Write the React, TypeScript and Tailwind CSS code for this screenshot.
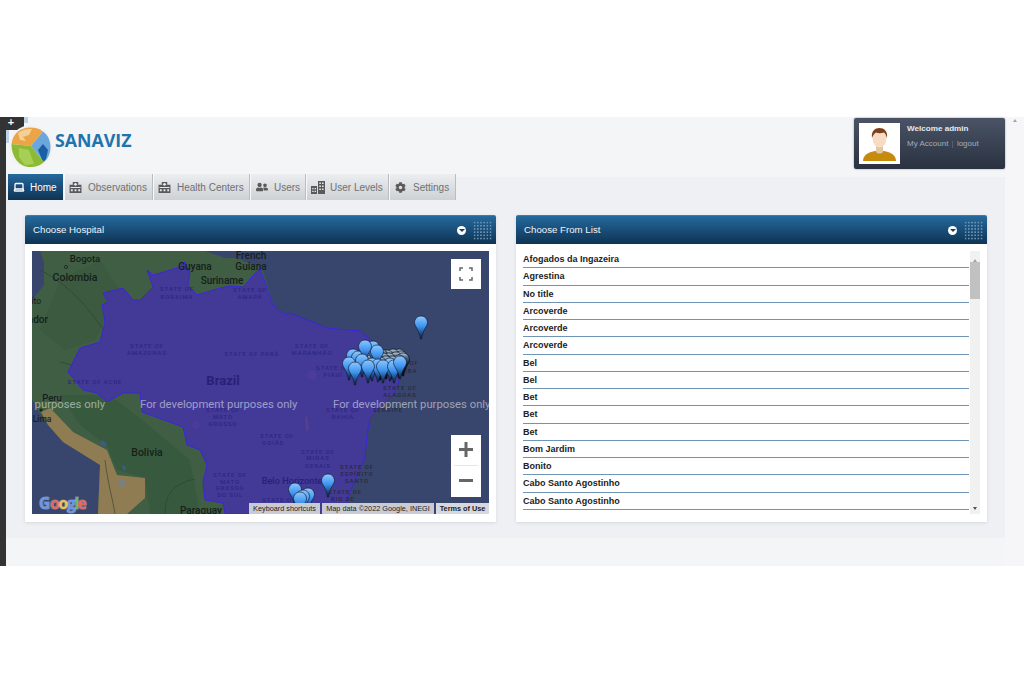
import { Laptop } from "lucide-react";
import { FaCog, FaUserFriends } from "react-icons/fa";

const places = [
  "Afogados da Ingazeira",
  "Agrestina",
  "No title",
  "Arcoverde",
  "Arcoverde",
  "Arcoverde",
  "Bel",
  "Bel",
  "Bet",
  "Bet",
  "Bet",
  "Bom Jardim",
  "Bonito",
  "Cabo Santo Agostinho",
  "Cabo Santo Agostinho",
];

// top-centre of each marker, back to front
const backPins = [
  [399, 349], [393, 349], [387, 350], [381, 349], [375, 351], [370, 353],
  [401, 351], [396, 352], [389, 353], [383, 353], [377, 354], [371, 355],
  [403, 353], [399, 355], [392, 356], [386, 356], [380, 357],
];
const frontPins = [
  [373, 341], [377, 345], [353, 349], [358, 351], [365, 340], [362, 354], [349, 357],
  [372, 358], [378, 359], [390, 358], [355, 362], [368, 360], [383, 360], [394, 360], [400, 356],
  [421, 316], [295, 483], [308, 488], [303, 490], [300, 492], [328, 474],
];

const stateLabels: [string, number, number][] = [
  ["STATE OF", 147, 348], ["AMAZONAS", 147, 355],
  ["STATE OF", 177, 291], ["RORAIMA", 177, 299],
  ["STATE OF", 250, 292], ["AMAPÁ", 250, 299],
  ["STATE OF PARÁ", 252, 356], ["STATE OF ACRE", 95, 384],
  ["STATE OF", 312, 348], ["MARANHÃO", 312, 355],
  ["STATE OF", 333, 370], ["PIAUÍ", 333, 377],
  ["STATE OF", 223, 412], ["MATO", 223, 419], ["GROSSO", 223, 426],
  ["STATE OF", 230, 477], ["MATO", 230, 484], ["GROSSO", 230, 490], ["DO SUL", 230, 497],
  ["STATE OF", 277, 438], ["GOIÁS", 273, 445],
  ["STATE OF", 318, 454], ["MINAS", 318, 460], ["GERAIS", 318, 468],
  ["STATE OF", 343, 412], ["BAHIA", 343, 419],
  ["STATE O", 277, 502],
];

const darkStateLabels: [string, number, number][] = [
  ["STATE OF", 357, 469], ["ESPÍRITO", 357, 476], ["SANTO", 357, 483],
  ["STATE OF", 345, 494], ["RIO DE", 343, 501],
  ["STATE OF", 400, 390], ["ALAGOAS", 400, 397],
  ["OF", 414, 365], ["PARAÍBA", 402, 373], ["SERGIPE", 388, 412],
];

const mapLabels: [string, number, number, number][] = [
  ["Bogota", 85, 262, 9.5],
  ["Colombia", 75, 281, 10.5],
  ["Guyana", 195, 270, 10],
  ["Suriname", 222, 284, 10],
  ["French", 251, 259, 10],
  ["Guiana", 251, 270, 10],
  ["Peru", 52, 401, 9.5],
  ["Lima", 42, 422, 8.5],
  ["Bolivia", 147, 456, 10.5],
  ["Paraguay", 201, 514, 10],
];

function Pin({ x, y, dark }: { x: number; y: number; dark?: boolean }) {
  return (
    <g transform={`translate(${x - 6.5} ${y})`}>
      <path
        d="M6.5 0C10.1 0 13 2.9 13 6.5 13 10.5 8 14 7.1 23H5.9C5 14 0 10.5 0 6.5 0 2.9 2.9 0 6.5 0Z"
        fill={dark ? "url(#pinDark)" : "url(#pinBlue)"}
        stroke={dark ? "#05070d" : "#141d33"}
        strokeWidth="0.7"
      />
    </g>
  );
}

function MapDrawing() {
  const brazil =
    "147,270 153,275 177,268 185,262 190,273 188,285 197,295 220,288 230,286 243,287 260,268 267,288 273,305 285,315 290,313 320,325 327,328 360,331 373,342 403,362 403,372 393,395 370,418 367,435 365,458 350,492 347,502 337,514 225,514 223,503 205,500 203,482 207,465 200,450 187,445 183,427 142,412 140,393 123,393 107,402 97,393 83,390 68,372 80,348 100,342 105,322 102,305 108,302 103,293 123,288 133,300 140,300 153,287";
  return (
    <svg viewBox="32 251 457 263" className="block w-full h-full" style={{ fontFamily: "Roboto, sans-serif" }}>
      <defs>
        <linearGradient id="pinBlue" x1="0" y1="0" x2="0" y2="1">
          <stop offset="0" stopColor="#8cc8ff" />
          <stop offset="0.45" stopColor="#3f94ee" />
          <stop offset="0.75" stopColor="#1c4f8c" />
          <stop offset="1" stopColor="#0d1a30" />
        </linearGradient>
        <linearGradient id="pinDark" x1="0" y1="0" x2="0" y2="1">
          <stop offset="0" stopColor="#c3d3e2" />
          <stop offset="0.18" stopColor="#4f6d8e" />
          <stop offset="0.5" stopColor="#10192a" />
          <stop offset="1" stopColor="#05070d" />
        </linearGradient>
      </defs>

      <rect x="32" y="251" width="457" height="263" fill="#38466d" />
      <polygon
        points="40,251 205,251 225,258 236,258 262,268 275,310 403,362 360,400 320,514 98,514 100,465 63,442 48,425 38,410 32,400 32,300 44,285 44,262"
        fill="#3f5e43"
      />
      <polygon points="60,395 110,395 142,420 190,460 200,514 150,514 145,478 117,470 107,446 80,425" fill="#375a3e" />
      <polygon points="50,408 57,415 73,432 107,450 117,475 145,478 145,498 127,514 98,514 100,465 63,442 48,425 41,412" fill="#8f7c52" />
      <polygon points="60,280 100,260 120,290 95,340 65,350 40,330" fill="#3b5a40" />
      <path d="M102 440l5 4-2 3-5-4z" fill="#3d5a8c" />
      <path d="M123 465l3 2-1 4-3-3z" fill="#3d5a8c" />
      <circle cx="122" cy="483" r="4" fill="#7d7f7a" />
      <path d="M40 270c30 15 50 40 65 62M60 362c25 5 30 15 40 20M105 460c3 25 8 40 10 54M165 514c0-20 8-30 30-35" fill="none" stroke="#2c3f2d" strokeWidth="0.6" />

      <polygon points={brazil} fill="#423a96" stroke="#3a22e6" strokeWidth="0.9" strokeLinejoin="round" />
      <circle cx="312" cy="375" r="5" fill="#4a3c98" />
      <path d="M307 415l2 14-3 3-1-14z" fill="#55408f" />
      <circle cx="196" cy="425" r="4" fill="#4a3c98" />

      <g fill="#2f2585" fontSize="6" fontWeight="500" textAnchor="middle" letterSpacing="0.9">
        {stateLabels.map(([t, x, y], i) => (
          <text key={i} x={x} y={y}>{t}</text>
        ))}
      </g>
      <g fill="#2c2838" fontSize="6" fontWeight="500" textAnchor="middle" letterSpacing="0.9">
        {darkStateLabels.map(([t, x, y], i) => (
          <text key={i} x={x} y={y}>{t}</text>
        ))}
      </g>
      <text x="223" y="385" fontSize="13" fontWeight="700" fill="#2a1f78" textAnchor="middle">Brazil</text>
      <text x="292" y="484" fontSize="9.2" fontWeight="500" fill="#2a1f78" textAnchor="middle">Belo Horizonte</text>

      <g fill="#16201a" fontWeight="500" textAnchor="middle">
        {mapLabels.map(([t, x, y, s]) => (
          <text key={t} x={x} y={y} fontSize={s}>{t}</text>
        ))}
      </g>
      <text x="41" y="304" fontSize="8.5" fill="#16201a" textAnchor="end">Quito</text>
      <text x="48" y="323" fontSize="10" fontWeight="500" fill="#16201a" textAnchor="end">Ecuador</text>
      <circle cx="66" cy="267" r="1.6" fill="none" stroke="#1b241c" strokeWidth="0.8" />
      <circle cx="41" cy="410" r="1.5" fill="#1b241c" />

      <g fill="#ffffff" fillOpacity="0.5" fontSize="11.3">
        <text x="105" y="408" textAnchor="end">purposes only</text>
        <text x="140" y="408">For development purposes only</text>
        <text x="333" y="408">For development purposes only</text>
      </g>

      <g fontSize="15.5" fontWeight="700" stroke="#ffffff" strokeOpacity="0.35" strokeWidth="1.2" paintOrder="stroke" style={{ fontFamily: '"Open Sans", sans-serif' }}>
        <text x="39" y="509" fill="#6b97e8">G</text>
        <text x="50" y="509" fill="#e8675c">o</text>
        <text x="58.5" y="509" fill="#eec24a">o</text>
        <text x="67" y="509" fill="#6b97e8">g</text>
        <text x="74.5" y="509" fill="#6cb46c">l</text>
        <text x="77.5" y="509" fill="#e8675c">e</text>
      </g>

      {backPins.map(([x, y], i) => (
        <Pin key={i} x={x} y={y} dark />
      ))}
      {frontPins.map(([x, y], i) => (
        <Pin key={i} x={x} y={y} />
      ))}
    </svg>
  );
}

function HospitalIcon() {
  return (
    <svg viewBox="0 0 14 12" className="w-[13px] h-[11px]" fill="#5a5a5a">
      <path d="M4 0h6v3h3.5v9H.5V3H4z" />
      <path d="M6.2 1h1.6v1h1v1.2h-1v1H6.2v-1h-1V2h1z" fill="#e5e7e9" />
      <path d="M1.5 5.5h11v1h-11zM2 8h2v2H2zM6 8h2v2H6zM10 8h2v2h-2z" fill="#e5e7e9" />
    </svg>
  );
}

function LevelsIcon() {
  return (
    <svg viewBox="0 0 14 13" className="w-[14px] h-[13px]" fill="#5a5a5a">
      <path d="M7 0h7v13H7zM0 5h6v8H0z" />
      <path d="M8.3 1.5h1.6v1.4H8.3zM11 1.5h1.6v1.4H11zM8.3 4.5h1.6v1.4H8.3zM11 4.5h1.6v1.4H11zM8.3 7.5h1.6v1.4H8.3zM11 7.5h1.6v1.4H11zM1.2 7h1.4v1.3H1.2zM3.6 7h1.4v1.3H3.6zM1.2 9.8h1.4v1.3H1.2zM3.6 9.8h1.4v1.3H3.6z" fill="#e5e7e9" />
    </svg>
  );
}

function Logo() {
  return (
    <svg viewBox="0 0 44 44" className="w-[44px] h-[46px]">
      <circle cx="22" cy="22" r="22" fill="#f2f2f2" />
      <path d="M22 21 2.500 19C3.500 9 11 2.500 21 2.500c6 0 10 1.500 13 4z" fill="#eda447" />
      <path d="M9 8c4-3 9-4.500 14-4l-3 6-6 2 3 4-6-1z" fill="#f3d095" />
      <path d="M22 21 34 6.500C39 10 41.500 16 41.500 22c0 6-2.500 12-6.500 15z" fill="#6ba6dc" />
      <path d="M29 25l5-6 5 6-2 9-3 3z" fill="#1a5ea6" />
      <path d="M22 21 35 37c-3 3-8 5-14 5C10 42 2.500 32 2.500 19z" fill="#8cba34" />
      <path d="M10 23l10 2 5 14-9 1-6-8z" fill="#a7cf55" />
    </svg>
  );
}

function Avatar() {
  return (
    <svg viewBox="0 0 41 41" className="w-[41px] h-[41px] block bg-white">
      <path d="M4 38c0-7 7-9 12-10h9c5 1 12 3 12 10z" fill="#c68b0c" />
      <path d="M17 22h7v7c-1.500 2-5.500 2-7 0z" fill="#e2c6a6" />
      <ellipse cx="20.500" cy="15" rx="7" ry="9.500" fill="#f6dcc0" />
      <path d="M13 15c-1-7 3-10 7.500-10S29 8 28 15c-1-3-2-5-3-5.500-3 1-6 1-8 0-2 1-3 3-4 5.500z" fill="#7d3f1f" />
    </svg>
  );
}

function PanelHeader({ title }: { title: string }) {
  return (
    <div className="h-[29px] flex items-center justify-between pl-2 pr-[4px] rounded-t-[2px] bg-gradient-to-b from-[#26699e] to-[#0e3454] border-t border-[#3a7cb0]">
      <span className="text-[9.7px] text-[#f1f4f7]">{title}</span>
      <div className="flex items-center gap-[7px]">
        <span className="w-[9px] h-[9px] rounded-full bg-white flex items-center justify-center">
          <span className="mt-[1px] border-x-[3px] border-x-transparent border-t-[3px] border-t-[#1c3d5c]" />
        </span>
        <span className="w-[19px] h-[19px] bg-[radial-gradient(circle,#6d93b3_0.7px,transparent_0.9px)] bg-[length:3.2px_3.2px]" />
      </div>
    </div>
  );
}

function NavItem({ icon, label, width, active }: { icon: React.ReactNode; label: string; width: string; active?: boolean }) {
  return (
    <div
      className={`${width} h-[26px] flex items-center pl-[3px] text-[10px] whitespace-nowrap ${
        active
          ? "gap-[4px] bg-gradient-to-b from-[#26699e] to-[#0e3454] text-white"
          : "gap-[5px] bg-gradient-to-b from-[#eceef0] to-[#cdd1d5] text-[#6d7174] border-l border-[#f7f8f9] border-r-[#b9bdc1] border-r"
      }`}
    >
      <span className="w-[15px] flex justify-center">{icon}</span>
      <span>{label}</span>
    </div>
  );
}

export default function App() {
  return (
    <div className="h-[683px] w-[1024px] overflow-hidden bg-white flex flex-col" style={{ fontFamily: '"Liberation Sans", Arial, sans-serif' }}>
      <div className="h-[117px]" />
      <div className="relative h-[449px] flex bg-[#f4f5f6]">
        <div className="w-[6px] bg-[#333333]" />
        <div className="absolute left-0 top-0 w-[24px] h-[13px] bg-[#333333] text-white text-[11px] leading-[10px] font-bold text-center pr-[2px]">+</div>
        <div className="absolute left-[24px] top-0 w-[4px] h-[6px] bg-[radial-gradient(circle,#7fa6d6_0.6px,transparent_0.8px)] bg-[length:2px_2px]" />
        <div className="absolute left-[6px] top-[13px] w-[3px] h-[13px] bg-[radial-gradient(circle,#7fa6d6_0.6px,transparent_0.8px)] bg-[length:2px_2px]" />

        <div className="w-[999px] flex flex-col">
          <div className="h-[60px] flex justify-between relative">
            <div className="flex items-start pl-[3px] pt-[7px]">
              <Logo />
              <span className="text-[17.8px] font-bold text-[#1f74ad] leading-none mt-[8px] ml-[2px]" style={{ fontFamily: '"Open Sans", sans-serif' }}>SANAVIZ</span>
            </div>
            <div className="mt-[1px] h-[51px] w-[151px] rounded-[2px] bg-gradient-to-b from-[#4a5466] to-[#2a3241] flex gap-[7px] p-[5px] shadow-[0_0_2px_#8a8f98]">
              <Avatar />
              <div className="pt-[1px]">
                <p className="text-[8.1px] font-bold text-[#e6e9ef] leading-[10px]">Welcome admin</p>
                <p className="text-[8px] text-[#a7acb6] leading-[10px] mt-[5px]">My Account <span className="text-[#6a7180] mx-[1px]">|</span> logout</p>
              </div>
            </div>
          </div>

          <div className="bg-[#eff0f4] pl-[2px] pb-[16px] flex flex-col">
            <div className="flex -mt-[3px]">
              <NavItem active width="w-[55px]" label="Home" icon={<Laptop size={12} strokeWidth={2.6} />} />
              <NavItem width="w-[89px] ml-[1px]" label="Observations" icon={<HospitalIcon />} />
              <NavItem width="w-[97px]" label="Health Centers" icon={<HospitalIcon />} />
              <NavItem width="w-[56px]" label="Users" icon={<FaUserFriends size={12} color="#5a5a5a" />} />
              <NavItem width="w-[83px]" label="User Levels" icon={<LevelsIcon />} />
              <NavItem width="w-[67px]" label="Settings" icon={<FaCog size={11} color="#5a5a5a" />} />
            </div>

            <div className="flex gap-[20px] pl-[17px] mt-[15px]">
              <section className="w-[471px] shadow-[0_1px_3px_#d5d7dc]">
                <PanelHeader title="Choose Hospital" />
                <div className="bg-white p-[7px] pb-[8px]">
                  <div className="relative h-[263px] overflow-hidden">
                    <MapDrawing />
                    <div className="absolute left-[419px] top-[8px] w-[30px] h-[30px] bg-white flex items-center justify-center">
                      <svg viewBox="0 0 14 14" className="w-[14px] h-[14px]" fill="none" stroke="#666" strokeWidth="1.500">
                        <path d="M1 4V1h3M10 1h3v3M13 10v3h-3M4 13H1v-3" />
                      </svg>
                    </div>
                    <div className="absolute left-[419px] top-[184px] w-[30px] h-[62px] bg-white flex flex-col items-center">
                      <svg viewBox="0 0 30 30" className="w-[30px] h-[30px]" fill="#666">
                        <path d="M8 13h14v3H8zM13.500 7h3v15h-3z" />
                      </svg>
                      <span className="w-[24px] h-px bg-[#e6e6e6]" />
                      <svg viewBox="0 0 30 30" className="w-[30px] h-[30px]" fill="#666">
                        <path d="M8 13h14v3H8z" />
                      </svg>
                    </div>
                    <div className="absolute right-0 bottom-0 h-[11px] flex gap-[2px] text-[7.3px] leading-[11px] text-[#222]">
                      <span className="w-[71px] bg-[#c9cbd4] text-center">Keyboard shortcuts</span>
                      <span className="w-[112px] bg-[#c9cbd4] text-center">Map data ©2022 Google, INEGI</span>
                      <span className="w-[53px] bg-[#d6d8de] text-center font-bold">Terms of Use</span>
                    </div>
                  </div>
                </div>
              </section>

              <section className="w-[471px] shadow-[0_1px_3px_#d5d7dc]">
                <PanelHeader title="Choose From List" />
                <div className="bg-white p-[7px] pb-[8px] flex h-[278px]">
                  <ul className="w-[446px] h-[263px] overflow-hidden">
                    {places.map((p, i) => (
                      <li key={i} className="h-[17.25px] leading-[17px] text-[9px] font-bold text-[#222] border-b border-[#6f94b4]">
                        {p}
                      </li>
                    ))}
                  </ul>
                  <div className="w-[10px] ml-px h-[263px] bg-[#f1f1f1] flex flex-col items-center">
                    <span className="mt-[4px] h-[7px] border-x-[2.500px] border-x-transparent border-b-[3px] border-b-[#a3a3a3]" />
                    <span className="w-full h-[37px] bg-[#c1c1c1]" />
                    <span className="mt-auto mb-[4px] border-x-[2.500px] border-x-transparent border-t-[3px] border-t-[#505050]" />
                  </div>
                </div>
              </section>
            </div>
          </div>
        </div>

        <div className="flex-1 flex justify-center pt-[2px] bg-[#f6f6f8]">
          <span className="h-0 border-x-[2.500px] border-x-transparent border-b-[3px] border-b-[#a3a3a3]" />
        </div>
      </div>
    </div>
  );
}
